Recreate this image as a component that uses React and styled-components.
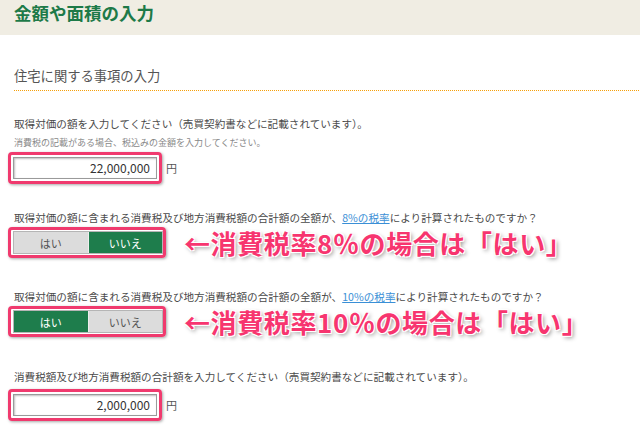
import React from "react";
import styled, { createGlobalStyle } from "styled-components";

const Global = createGlobalStyle`
  html, body { margin: 0; padding: 0; background: #fff; }
  body { font-family: "Noto Sans CJK JP", "Noto Sans", sans-serif; width: 640px; height: 435px; overflow: hidden; }
`;

const Header = styled.header`
  height: 35px;
  background: #f0ede3;
  padding-left: 14px;
  box-sizing: border-box;
`;

const PageTitle = styled.h1`
  margin: 0;
  font-size: 17.5px;
  line-height: 26px;
  font-weight: 700;
  color: #1d7a48;
`;

const Content = styled.main`
  padding-left: 14px;
`;

const SectionTitle = styled.h2`
  margin: 31px 0 0;
  font-size: 13.3px;
  line-height: 20px;
  font-weight: 400;
  color: #555;
  padding-bottom: 5px;
  background-image: repeating-linear-gradient(
    to right,
    #f5a00a 0,
    #f5a00a 1px,
    transparent 1px,
    transparent 2px
  );
  background-size: 100% 1px;
  background-repeat: no-repeat;
  background-position: left bottom;
`;

const Question = styled.p`
  margin: ${(p) => p.$mt}px 0 0;
  font-size: 10.6px;
  line-height: 18px;
  color: #4a4a4a;
  white-space: nowrap;
`;

const Note = styled.p`
  margin: 3px 0 0;
  font-size: 9px;
  line-height: 14px;
  color: #888;
`;

const Link = styled.a`
  color: #3a8fd6;
  text-decoration: underline;
`;

const Row = styled.div`
  display: flex;
  align-items: center;
  margin-top: ${(p) => p.$mt}px;
`;

const Highlight = styled.div`
  display: flex;
  margin-left: -6px;
  border: 3px solid #f03a6e;
  border-radius: 4px;
  padding: ${(p) => (p.$tight ? "1px 0 1px 2px" : "2px 2px 2px 2px")};
  box-shadow: 1px 1px 3px rgba(0, 0, 0, 0.35);
`;

const AmountInput = styled.div`
  width: 144px;
  height: 22px;
  box-sizing: border-box;
  border: 1px solid #9a9a9a;
  box-shadow: inset 1px 1px 2px rgba(0, 0, 0, 0.25);
  background: #fff;
  text-align: right;
  padding-right: 6px;
  font-size: 12px;
  line-height: 20px;
  color: #333;
`;

const Unit = styled.span`
  margin-left: 4px;
  font-size: 11px;
  color: #555;
`;

const Toggle = styled.div`
  display: flex;
  width: 150px;
  height: 23px;
  box-sizing: border-box;
  border: 1px solid #b5b5b5;
  background: #fff;
`;

const Segment = styled.div`
  flex: 1;
  display: flex;
  align-items: center;
  justify-content: center;
  font-size: 11px;
  background: ${(p) => (p.$on ? "#1e7d4c" : "#dcdcdc")};
  color: ${(p) => (p.$on ? "#fff" : "#555")};
  & + & { border-left: 1px solid #eee; }
`;

const Annotation = styled.span`
  margin-left: 18px;
  font-size: 26px;
  font-weight: 700;
  line-height: 30px;
  letter-spacing: 0.6px;
  color: #f7356f;
  white-space: nowrap;
  text-shadow: -1px -1px 0 #fff, 1px -1px 0 #fff, -1px 1px 0 #fff, 1px 1px 0 #fff,
    2px 2px 4px rgba(0, 0, 0, 0.45);
`;

function YesNo({ yes }) {
  return (
    <Highlight $tight>
      <Toggle>
        <Segment $on={yes}>はい</Segment>
        <Segment $on={!yes}>いいえ</Segment>
      </Toggle>
    </Highlight>
  );
}

export default function App() {
  return (
    <>
      <Global />
      <Header>
        <PageTitle>金額や面積の入力</PageTitle>
      </Header>
      <Content>
        <SectionTitle>住宅に関する事項の入力</SectionTitle>

        <Question $mt={24}>取得対価の額を入力してください（売買契約書などに記載されています）。</Question>
        <Note>消費税の記載がある場合、税込みの金額を入力してください。</Note>
        <Row $mt={2}>
          <Highlight>
            <AmountInput>22,000,000</AmountInput>
          </Highlight>
          <Unit>円</Unit>
        </Row>

        <Question $mt={25}>
          取得対価の額に含まれる消費税及び地方消費税額の合計額の全額が、<Link>8%の税率</Link>により計算されたものですか？
        </Question>
        <Row $mt={0}>
          <YesNo yes={false} />
          <Annotation>←消費税率8％の場合は「はい」</Annotation>
        </Row>

        <Question $mt={30}>
          取得対価の額に含まれる消費税及び地方消費税額の合計額の全額が、<Link>10%の税率</Link>により計算されたものですか？
        </Question>
        <Row $mt={0}>
          <YesNo yes={true} />
          <Annotation>←消費税率10％の場合は「はい」</Annotation>
        </Row>

        <Question $mt={31}>消費税額及び地方消費税額の合計額を入力してください（売買契約書などに記載されています）。</Question>
        <Row $mt={3}>
          <Highlight>
            <AmountInput>2,000,000</AmountInput>
          </Highlight>
          <Unit>円</Unit>
        </Row>
      </Content>
    </>
  );
}
